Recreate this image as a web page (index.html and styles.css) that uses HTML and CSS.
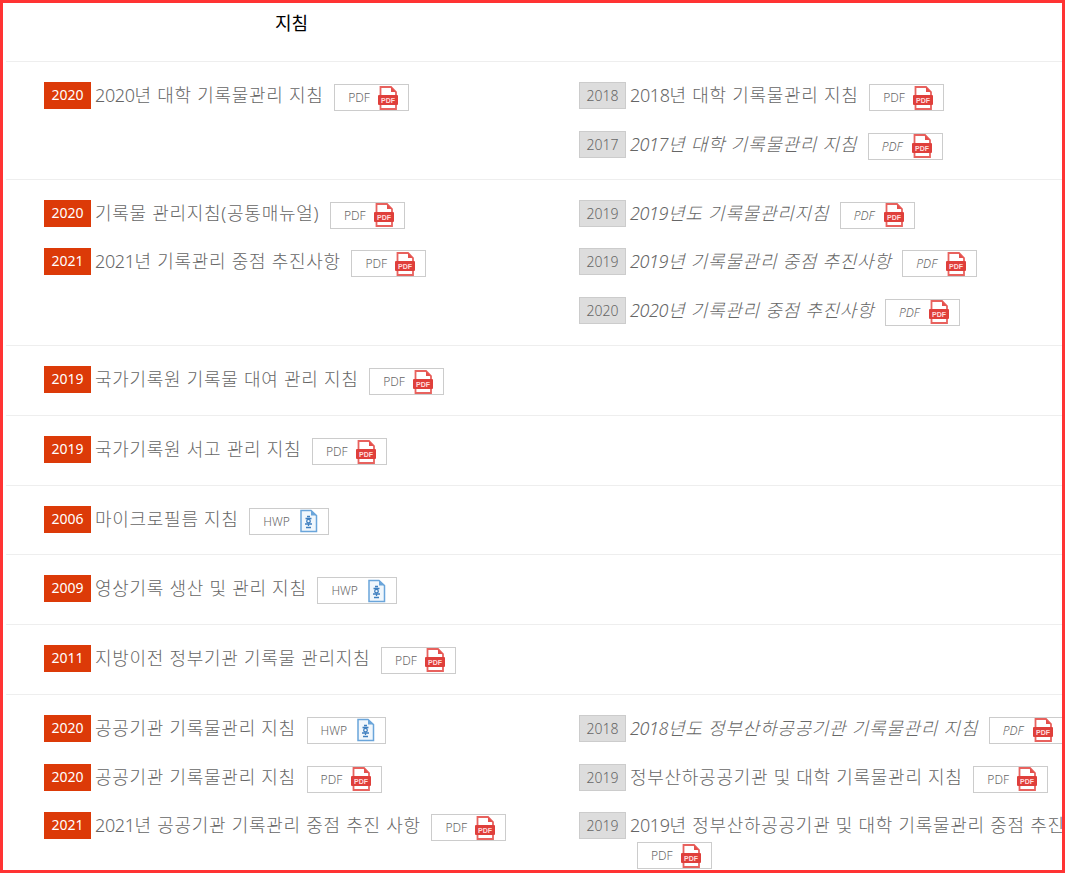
FILE: index.html
```html
<!DOCTYPE html>
<html lang="ko">
<head>
  <meta charset="UTF-8" />
  <title>지침</title>
  <link rel="stylesheet" href="styles.css">
</head>
<body>
  <svg class="defs" width="0" height="0">
    <symbol id="pdf" viewBox="0 0 20 24">
      <path d="M2.500 1h10.500l5 5v17h-15.500z" fill="#fff" stroke="#e8625e" stroke-width="1.800"/>
      <path d="M13 1v5h5z" fill="#e5504c"/>
      <rect x="0" y="9" width="20" height="10" rx="1" fill="#df3f3b"/>
      <text x="10" y="17" text-anchor="middle" class="pdf-label">PDF</text>
    </symbol>
    <symbol id="hwp" viewBox="0 0 20 24">
      <path d="M3 1.500h10l5.500 5v16h-15.500z" fill="#f1f7fc" stroke="#6aa5da" stroke-width="1.500"/>
      <path d="M13 1.500v5h5.500z" fill="#6aa5da"/>
      <path d="M9 7.500h3M7.500 9.500h6M7 15h7M10.500 15v2M8 18.500h5" fill="none" stroke="#3f7fbf" stroke-width="1.300"/>
      <circle cx="10.500" cy="12.200" r="1.800" fill="none" stroke="#3f7fbf" stroke-width="1.300"/>
    </symbol>
  </svg>

  <div class="frame">
    <h3 class="title">지침</h3>

    <div class="section first">
      <ul class="col">
        <li class="item"><span class="year">2020</span><span class="name"><span class="num">2020</span>년 대학 기록물관리 지침</span> <a class="file">PDF<svg class="ico"><use href="#pdf"/></svg></a></li>
      </ul>
      <ul class="col">
        <li class="item"><span class="year old">2018</span><span class="name"><span class="num">2018</span>년 대학 기록물관리 지침</span> <a class="file">PDF<svg class="ico"><use href="#pdf"/></svg></a></li>
        <li class="item em"><span class="year old">2017</span><span class="name"><span class="num">2017</span>년 대학 기록물관리 지침</span> <a class="file">PDF<svg class="ico"><use href="#pdf"/></svg></a></li>
      </ul>
    </div>

    <div class="section">
      <ul class="col">
        <li class="item"><span class="year">2020</span><span class="name">기록물 관리지침(공통매뉴얼)</span> <a class="file">PDF<svg class="ico"><use href="#pdf"/></svg></a></li>
        <li class="item"><span class="year">2021</span><span class="name"><span class="num">2021</span>년 기록관리 중점 추진사항</span> <a class="file">PDF<svg class="ico"><use href="#pdf"/></svg></a></li>
      </ul>
      <ul class="col">
        <li class="item em"><span class="year old">2019</span><span class="name"><span class="num">2019</span>년도 기록물관리지침</span> <a class="file">PDF<svg class="ico"><use href="#pdf"/></svg></a></li>
        <li class="item em"><span class="year old">2019</span><span class="name"><span class="num">2019</span>년 기록물관리 중점 추진사항</span> <a class="file">PDF<svg class="ico"><use href="#pdf"/></svg></a></li>
        <li class="item em"><span class="year old">2020</span><span class="name"><span class="num">2020</span>년 기록관리 중점 추진사항</span> <a class="file">PDF<svg class="ico"><use href="#pdf"/></svg></a></li>
      </ul>
    </div>

    <div class="section">
      <ul class="col">
        <li class="item"><span class="year">2019</span><span class="name">국가기록원 기록물 대여 관리 지침</span> <a class="file">PDF<svg class="ico"><use href="#pdf"/></svg></a></li>
      </ul>
    </div>

    <div class="section">
      <ul class="col">
        <li class="item"><span class="year">2019</span><span class="name">국가기록원 서고 관리 지침</span> <a class="file">PDF<svg class="ico"><use href="#pdf"/></svg></a></li>
      </ul>
    </div>

    <div class="section">
      <ul class="col">
        <li class="item"><span class="year">2006</span><span class="name">마이크로필름 지침</span> <a class="file">HWP<svg class="ico"><use href="#hwp"/></svg></a></li>
      </ul>
    </div>

    <div class="section">
      <ul class="col">
        <li class="item"><span class="year">2009</span><span class="name">영상기록 생산 및 관리 지침</span> <a class="file">HWP<svg class="ico"><use href="#hwp"/></svg></a></li>
      </ul>
    </div>

    <div class="section">
      <ul class="col">
        <li class="item"><span class="year">2011</span><span class="name">지방이전 정부기관 기록물 관리지침</span> <a class="file">PDF<svg class="ico"><use href="#pdf"/></svg></a></li>
      </ul>
    </div>

    <div class="section last">
      <ul class="col">
        <li class="item"><span class="year">2020</span><span class="name">공공기관 기록물관리 지침</span> <a class="file">HWP<svg class="ico"><use href="#hwp"/></svg></a></li>
        <li class="item"><span class="year">2020</span><span class="name">공공기관 기록물관리 지침</span> <a class="file">PDF<svg class="ico"><use href="#pdf"/></svg></a></li>
        <li class="item"><span class="year">2021</span><span class="name"><span class="num">2021</span>년 공공기관 기록관리 중점 추진 사항</span> <a class="file">PDF<svg class="ico"><use href="#pdf"/></svg></a></li>
      </ul>
      <ul class="col">
        <li class="item em"><span class="year old">2018</span><span class="name"><span class="num">2018</span>년도 정부산하공공기관 기록물관리 지침</span> <a class="file">PDF<svg class="ico"><use href="#pdf"/></svg></a></li>
        <li class="item"><span class="year old">2019</span><span class="name">정부산하공공기관 및 대학 기록물관리 지침</span> <a class="file">PDF<svg class="ico"><use href="#pdf"/></svg></a></li>
        <li class="item"><span class="year old">2019</span><span class="name"><span class="num">2019</span>년 정부산하공공기관 및 대학 기록물관리 중점 추진사항</span> <a class="file">PDF<svg class="ico"><use href="#pdf"/></svg></a></li>
      </ul>
    </div>
  </div>
</body>
</html>
```

FILE: styles.css
```css
* { box-sizing: border-box; }
html, body { margin: 0; padding: 0; }
body { font-family: "Noto Sans", "Noto Sans CJK KR", sans-serif; color: #666; background: #fff; }
.defs { position: absolute; }
.pdf-label { font: bold 7px "Liberation Sans", sans-serif; fill: #fdd; }

.frame { height: 873px; border: 3px solid #ff3333; overflow: hidden; }
.title { margin: 0; height: 58px; padding: 8px 0 0 272px; font-size: 18px; line-height: 24px; font-weight: 400; color: #000; }

.section { display: grid; grid-template-columns: 535px 535px; margin-left: 3px; padding: 20px 0 0 38px; border-top: 1px solid #eee; }
.section.first { height: 117.650px; }
.section.last { margin-top: 0.600px; }
.col { list-style: none; margin: 0; padding: 0; min-width: 0; }

.item { min-height: 48.600px; padding-left: 52px; text-indent: -52px; font-size: 18px; line-height: 28px; }
.item.em { font-style: italic; }

.year { display: inline-block; width: 47px; height: 27px; margin-right: 4px; background: #dc3a08; color: #fff; font-size: 14px; font-style: normal; line-height: 25px; text-align: center; text-indent: 0; vertical-align: top; }
.year.old { background: #ddd; border: 1px solid #ccc; color: #666; font-weight: 300; line-height: 25px; }
.name { white-space: nowrap; font-weight: 300; letter-spacing: 0.720px; vertical-align: top; line-height: 26px; }
.num { letter-spacing: -0.400px; }
.file { display: inline-flex; align-items: center; gap: 8px; min-width: 75px; height: 27px; margin: 2px 0 0 6px; padding: 0 10px 0 13px; border: 1px solid #ccc; font-size: 12px; font-weight: 300; line-height: 25px; text-indent: 0; vertical-align: top; }
.ico { width: 20px; height: 24px; margin-left: auto; }
```
